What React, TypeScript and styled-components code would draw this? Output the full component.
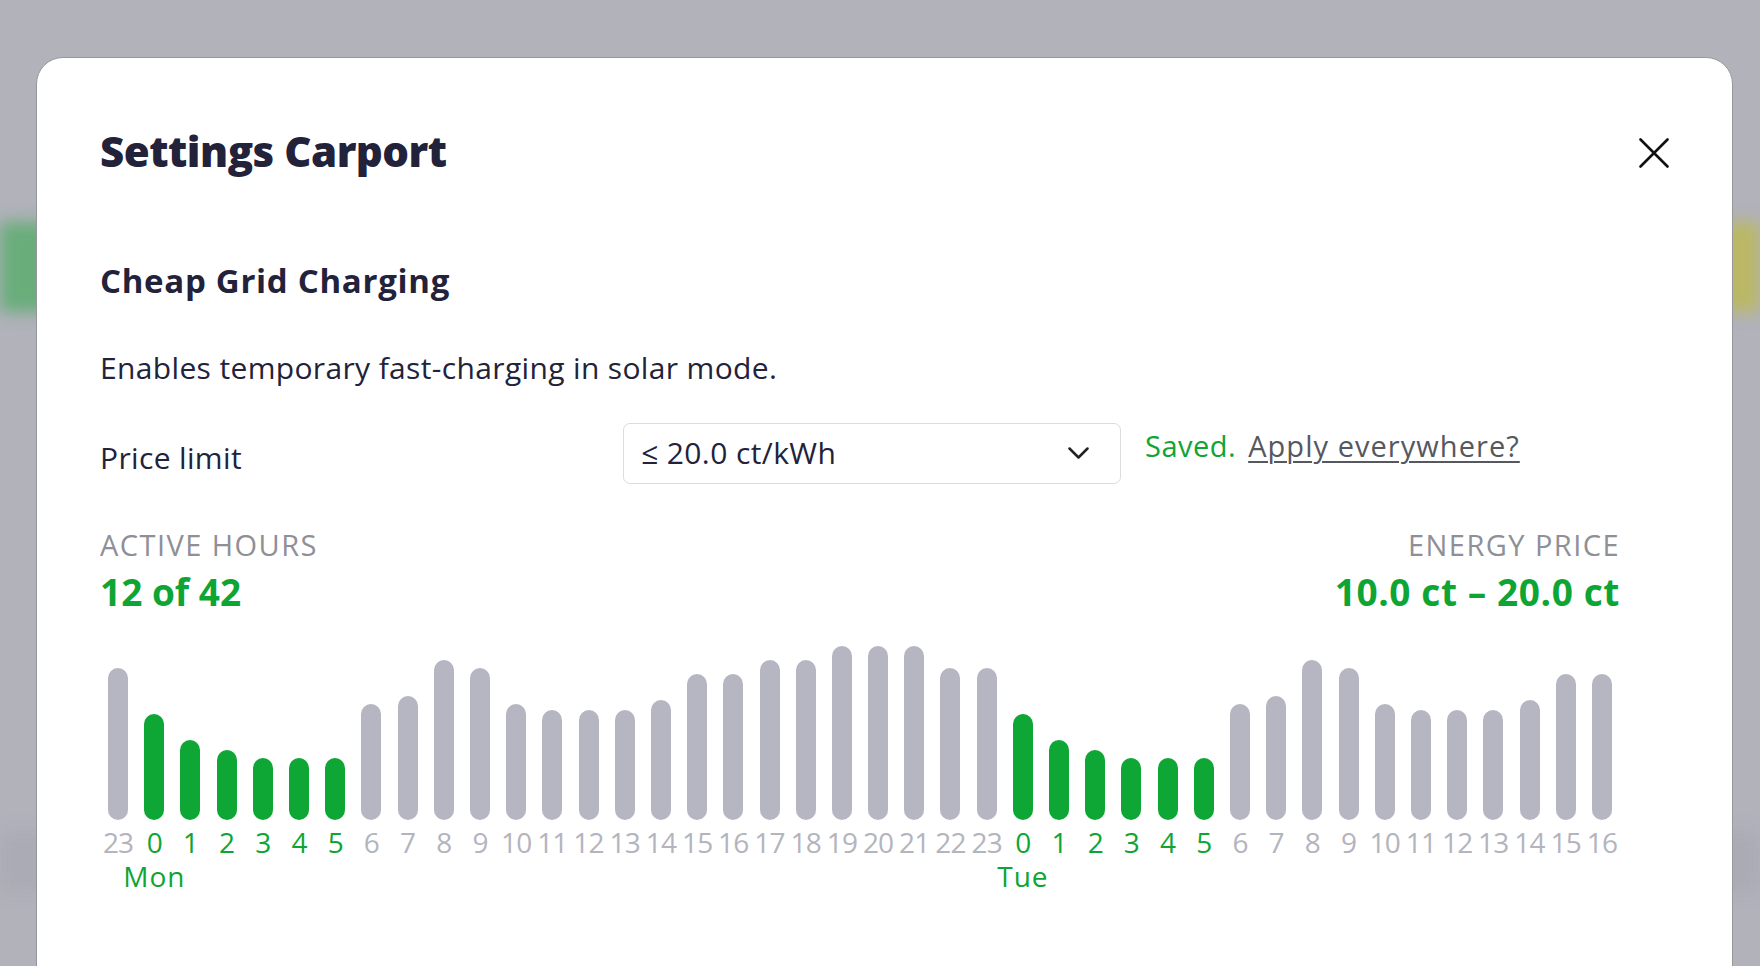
import React from 'react';
import styled, { createGlobalStyle } from 'styled-components';

const FONT = `"Open Sans", "Noto Sans", "DejaVu Sans", sans-serif`;
const GREEN = '#0fa535';
const INK = '#22223a';

const GlobalStyle = createGlobalStyle`
  html, body {
    margin: 0;
    padding: 0;
  }
  body {
    background: #b1b2ba;
    font-family: ${FONT};
    color: ${INK};
  }
  * {
    box-sizing: border-box;
  }
`;

const Page = styled.div`
  min-height: 100vh;
  overflow: hidden;
  background: #b1b2ba;
  padding-top: 222px;
`;

const BlurBand = styled.div`
  height: 90px;
  background: linear-gradient(90deg, #68ad7a 0%, #7fb073 45%, #b0b468 80%, #bbb865 100%);
  filter: blur(8px);
`;

const BlurSmear = styled.div`
  margin-top: 520px;
  height: 60px;
  background: rgba(90, 92, 100, 0.08);
  filter: blur(10px);
`;

const Dialog = styled.div`
  position: fixed;
  top: 57px;
  left: 36px;
  right: 27px;
  bottom: -60px;
  background: #fff;
  border: 1px solid #96979d;
  border-radius: 27px;
  padding: 0 63px;
`;

const Header = styled.div`
  display: flex;
  align-items: center;
  justify-content: space-between;
  padding-top: 68px;
`;

const Title = styled.h1`
  margin: 0;
  font-size: 42px;
  font-weight: 800;
  line-height: 1.2;
  letter-spacing: -0.5px;
  color: ${INK};
`;

const CloseButton = styled.button`
  display: flex;
  width: 30px;
  height: 30px;
  margin-top: 3px;
  padding: 0;
  border: 0;
  background: none;
  color: #111;
  cursor: pointer;
`;

const Body = styled.div`
  padding-right: 49px;
`;

const SectionTitle = styled.h2`
  margin: 85px 0 0;
  font-size: 33px;
  font-weight: 700;
  line-height: 1.2;
  letter-spacing: 0.7px;
`;

const Description = styled.p`
  margin: 49px 0 0;
  font-size: 30px;
  font-weight: 500;
  line-height: 1.2;
  letter-spacing: 0.35px;
`;

const PriceRow = styled.div`
  display: flex;
  align-items: center;
  margin-top: 37px;
`;

const FieldLabel = styled.div`
  width: 523px;
  flex-shrink: 0;
  padding-top: 9px;
  font-size: 30px;
  font-weight: 500;
  line-height: 1.2;
  letter-spacing: 0.35px;
`;

const Select = styled.div`
  display: flex;
  align-items: center;
  justify-content: space-between;
  width: 498px;
  height: 61px;
  flex-shrink: 0;
  padding: 0 31px 0 17px;
  border: 1.5px solid #dcdcdf;
  border-radius: 7px;
  font-size: 30px;
  font-weight: 500;
  line-height: 1.2;
  letter-spacing: 0.4px;
  color: ${INK};
`;

const Status = styled.div`
  display: flex;
  align-self: flex-start;
  gap: 12px;
  margin-left: 24px;
  padding-top: 6px;
  font-size: 29px;
  font-weight: 500;
  line-height: 1.2;
`;

const Saved = styled.span`
  color: ${GREEN};
  letter-spacing: 0.5px;
`;

const ApplyLink = styled.a`
  color: #55585f;
  text-decoration: underline;
  text-decoration-thickness: 1.5px;
  text-underline-offset: 4px;
  letter-spacing: 1.05px;
  cursor: pointer;
`;

const Stats = styled.div`
  display: flex;
  justify-content: space-between;
  margin-top: 44px;
`;

const Stat = styled.div<{ $align: 'start' | 'end' }>`
  display: flex;
  flex-direction: column;
  align-items: ${({ $align }) => ($align === 'end' ? 'flex-end' : 'flex-start')};
`;

const StatLabel = styled.span`
  font-size: 29px;
  font-weight: 500;
  line-height: 1.2;
  letter-spacing: 1.45px;
  text-transform: uppercase;
  color: #8e8f97;
`;

const StatValue = styled.span`
  margin-top: 7px;
  font-size: 37px;
  font-weight: 700;
  line-height: 1.2;
  color: ${GREEN};
`;

const PriceValue = styled(StatValue)`
  letter-spacing: 0.6px;
`;

const Chart = styled.div`
  display: grid;
  grid-template-columns: repeat(42, minmax(0, 1fr));
  margin-top: 26px;
`;

const Column = styled.div`
  display: flex;
  flex-direction: column;
  align-items: center;
`;

const BarTrack = styled.div`
  display: flex;
  align-items: flex-end;
  height: 180px;
`;

const Bar = styled.div<{ $active: boolean }>`
  width: 20px;
  border-radius: 10px;
  background: ${({ $active }) => ($active ? '#0ea634' : '#b5b6c2')};
`;

const HourLabel = styled.span<{ $active: boolean }>`
  margin-top: 8px;
  font-size: 28px;
  font-weight: 500;
  line-height: 1;
  letter-spacing: -0.8px;
  white-space: nowrap;
  color: ${({ $active }) => ($active ? GREEN : '#b3b4be')};
`;

const DayLabel = styled.span`
  height: 28px;
  margin-top: 6px;
  font-size: 28px;
  font-weight: 500;
  line-height: 1;
  letter-spacing: 0.9px;
  white-space: nowrap;
  color: ${GREEN};
`;

interface Hour {
  hour: number;
  height: number;
  active: boolean;
  day?: string;
}

const dayHeights = [106, 80, 70, 62, 62, 62, 116, 124, 160, 152, 116, 110, 110, 110, 120, 146, 146, 160, 160, 174, 174, 174, 152, 152];

const buildHours = (): Hour[] => {
  const hours: Hour[] = [{ hour: 23, height: 152, active: false }];
  ['Mon', 'Tue'].forEach((day, d) => {
    const count = d === 0 ? 24 : 17;
    for (let h = 0; h < count; h++) {
      hours.push({ hour: h, height: dayHeights[h], active: h <= 5, day: h === 0 ? day : undefined });
    }
  });
  return hours;
};

const CloseIcon = () => (
  <svg width="30" height="30" viewBox="0 0 30 30" fill="none">
    <path d="M1.5 1.5L28.5 28.5M28.5 1.5L1.5 28.5" stroke="currentColor" strokeWidth="2.6" strokeLinecap="round" />
  </svg>
);

const ChevronIcon = () => (
  <svg width="21" height="13" viewBox="0 0 21 13" fill="none">
    <path d="M1.5 1.5L10.5 10.5L19.5 1.5" stroke="#222" strokeWidth="2.5" strokeLinecap="round" strokeLinejoin="round" />
  </svg>
);

const App = () => {
  const hours = buildHours();
  const activeCount = hours.filter((h) => h.active).length;

  return (
    <>
      <GlobalStyle />
      <Page>
        <BlurBand />
        <BlurSmear />
      </Page>
      <Dialog role="dialog">
        <Header>
          <Title>Settings Carport</Title>
          <CloseButton aria-label="Close">
            <CloseIcon />
          </CloseButton>
        </Header>
        <Body>
          <SectionTitle>Cheap Grid Charging</SectionTitle>
          <Description>Enables temporary fast-charging in solar mode.</Description>
          <PriceRow>
            <FieldLabel>Price limit</FieldLabel>
            <Select>
              <span>≤ 20.0 ct/kWh</span>
              <ChevronIcon />
            </Select>
            <Status>
              <Saved>Saved.</Saved>
              <ApplyLink>Apply everywhere?</ApplyLink>
            </Status>
          </PriceRow>
          <Stats>
            <Stat $align="start">
              <StatLabel>Active hours</StatLabel>
              <StatValue>
                {activeCount} of {hours.length}
              </StatValue>
            </Stat>
            <Stat $align="end">
              <StatLabel>Energy price</StatLabel>
              <PriceValue>10.0 ct – 20.0 ct</PriceValue>
            </Stat>
          </Stats>
          <Chart>
            {hours.map((h, i) => (
              <Column key={i}>
                <BarTrack>
                  <Bar $active={h.active} style={{ height: h.height }} />
                </BarTrack>
                <HourLabel $active={h.active}>{h.hour}</HourLabel>
                <DayLabel>{h.day}</DayLabel>
              </Column>
            ))}
          </Chart>
        </Body>
      </Dialog>
    </>
  );
};

export default App;
